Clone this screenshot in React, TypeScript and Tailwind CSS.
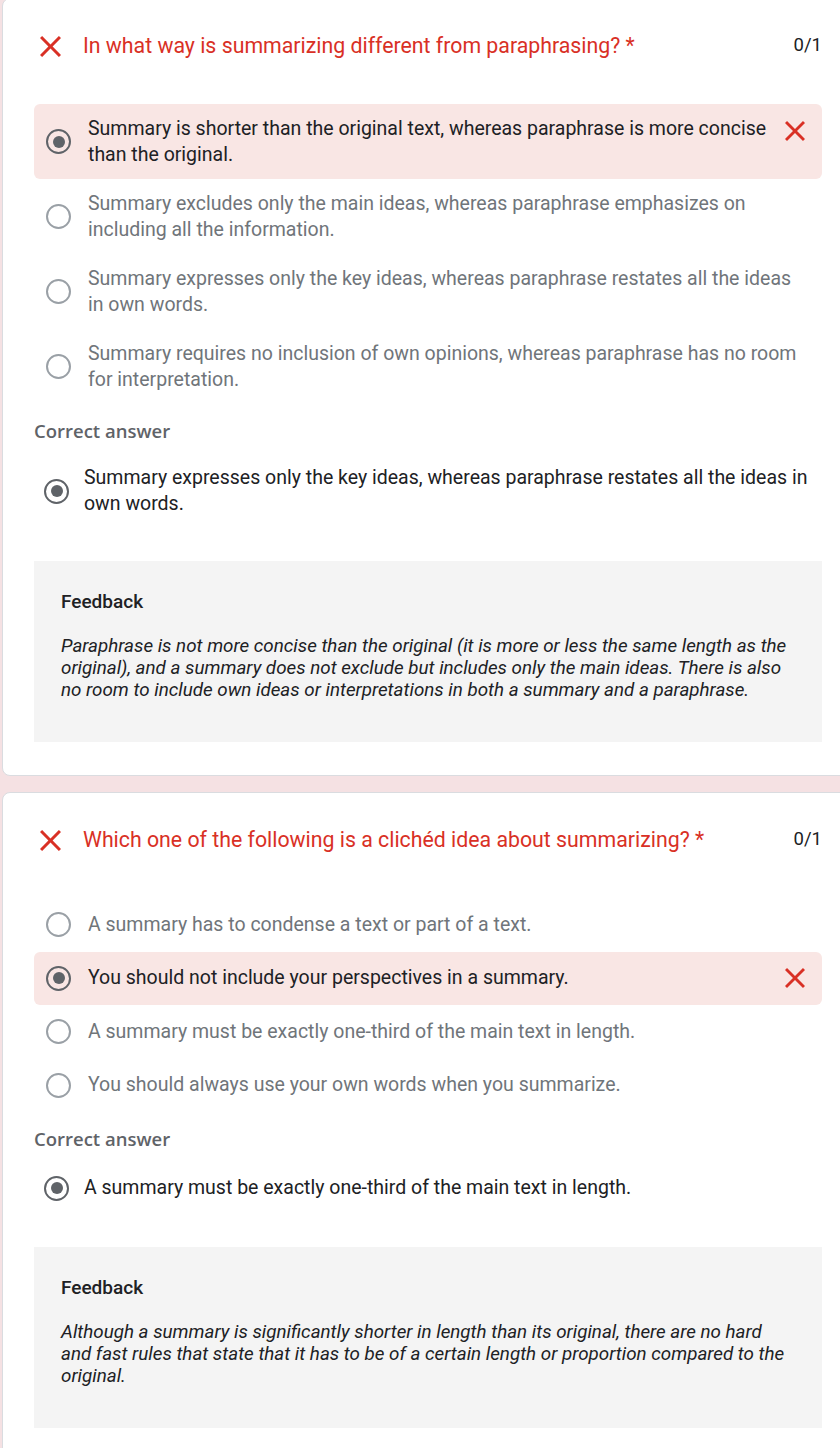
import React from "react";

type Option = { text: string; chosen?: boolean };

type Question = {
  title: string;
  options: Option[];
  correct: string;
  feedback: string;
};

const questions: Question[] = [
  {
    title: "In what way is summarizing different from paraphrasing? *",
    options: [
      {
        text: "Summary is shorter than the original text, whereas paraphrase is more concise than the original.",
        chosen: true,
      },
      {
        text: "Summary excludes only the main ideas, whereas paraphrase emphasizes on including all the information.",
      },
      {
        text: "Summary expresses only the key ideas, whereas paraphrase restates all the ideas in own words.",
      },
      {
        text: "Summary requires no inclusion of own opinions, whereas paraphrase has no room for interpretation.",
      },
    ],
    correct:
      "Summary expresses only the key ideas, whereas paraphrase restates all the ideas in own words.",
    feedback:
      "Paraphrase is not more concise than the original (it is more or less the same length as the original), and a summary does not exclude but includes only the main ideas. There is also no room to include own ideas or interpretations in both a summary and a paraphrase.",
  },
  {
    title: "Which one of the following is a clichéd idea about summarizing? *",
    options: [
      { text: "A summary has to condense a text or part of a text." },
      { text: "You should not include your perspectives in a summary.", chosen: true },
      { text: "A summary must be exactly one-third of the main text in length." },
      { text: "You should always use your own words when you summarize." },
    ],
    correct: "A summary must be exactly one-third of the main text in length.",
    feedback:
      "Although a summary is significantly shorter in length than its original, there are no hard and fast rules that state that it has to be of a certain length or proportion compared to the original.",
  },
];

/* Material "close" glyph, cropped to its drawn box */
function CloseMark({ size }: { size: number }) {
  return (
    <svg width={size} height={size} viewBox="5 5 14 14" className="shrink-0 fill-[#d93025]">
      <path d="M19 6.41L17.59 5 12 10.59 6.41 5 5 6.41 10.59 12 5 17.59 6.41 19 12 13.41 17.59 19 19 17.59 13.41 12z" />
    </svg>
  );
}

function Radio({ on }: { on?: boolean }) {
  return (
    <span
      className={`flex h-[25px] w-[25px] shrink-0 items-center justify-center rounded-full border-[2.5px] ${
        on ? "border-[#5f6368]" : "border-[#9aa0a6]"
      }`}
    >
      {on && <span className="h-[12px] w-[12px] rounded-full bg-[#5f6368]" />}
    </span>
  );
}

function QuestionCard({ q }: { q: Question }) {
  return (
    <section className="ml-[2px] mr-[-8px] rounded-lg border border-[#dadce0] bg-white pb-[33px] pl-[31px] pr-[25px] pt-[33px]">
      <header className="flex items-center">
        <span className="ml-[6px] mr-[22px]">
          <CloseMark size={21} />
        </span>
        <h2 className="flex-1 text-[21.3px] leading-[28px] text-[#d93025]">{q.title}</h2>
        <span className="text-[18.5px] text-[#202124]">0/1</span>
      </header>

      <ul className="mt-[44px]">
        {q.options.map((o, i) => (
          <li
            key={i}
            className={`flex items-center rounded-md py-[11.5px] pl-[12px] pr-[17px] ${
              o.chosen ? "bg-[#f9e6e4]" : ""
            }`}
          >
            <span className="mr-[17px] flex h-[30.5px] items-center">
              <Radio on={o.chosen} />
            </span>
            <span
              className={`flex-1 text-[19.5px] leading-[26px] ${
                o.chosen ? "text-[#202124]" : "text-[#70757a]"
              }`}
            >
              {o.text}
            </span>
            {o.chosen && (
              <span className="ml-[14px] self-start pt-[5px]">
                <CloseMark size={20} />
              </span>
            )}
          </li>
        ))}
      </ul>

      <p className="mt-[17px] font-['Open_Sans',sans-serif] text-[18.5px] font-semibold leading-[20px] text-[#5f6368]">
        Correct answer
      </p>

      <div className="mt-[24px] flex items-center pl-[10px] pr-[8px]">
        <span className="mr-[15px] flex h-[30px] items-center">
          <Radio on />
        </span>
        <span className="flex-1 text-[19.5px] leading-[26px] text-[#202124]">{q.correct}</span>
      </div>

      <div className="mt-[44px] bg-[#f4f4f4] px-[27px] pb-[41px] pt-[29px]">
        <p className="text-[19px] font-medium leading-[24px] text-[#202124]">Feedback</p>
        <p className="mt-[21px] text-[18.8px] italic leading-[22px] text-[#202124]">{q.feedback}</p>
      </div>
    </section>
  );
}

export default function App() {
  return (
    <div className="min-h-screen overflow-hidden bg-[#f5e1e3] font-['Roboto',sans-serif]">
      <div className="-mt-[2px] flex flex-col gap-[16px]">
        {questions.map((q, i) => (
          <QuestionCard key={i} q={q} />
        ))}
      </div>
    </div>
  );
}
